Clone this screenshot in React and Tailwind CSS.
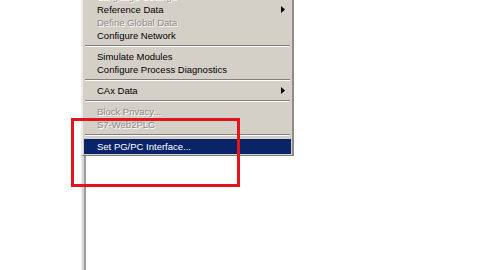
import React from 'react';

const items = [
  { type: 'item', label: 'Language Settings', disabled: true, sub: true },
  { type: 'item', label: 'Reference Data', sub: true },
  { type: 'item', label: 'Define Global Data', disabled: true },
  { type: 'item', label: 'Configure Network' },
  { type: 'sep' },
  { type: 'item', label: 'Simulate Modules' },
  { type: 'item', label: 'Configure Process Diagnostics' },
  { type: 'sep' },
  { type: 'item', label: 'CAx Data', sub: true },
  { type: 'sep' },
  { type: 'item', label: 'Block Privacy...', disabled: true },
  { type: 'item', label: 'S7-Web2PLC', disabled: true },
  { type: 'sep' },
  { type: 'item', label: 'Set PG/PC Interface...', active: true },
];

const Arrow = ({ active }) => (
  <svg width="4" height="7" viewBox="0 0 4 7" className="shrink-0">
    <polygon points="0,0 4,3.5 0,7" fill={active ? '#ffffff' : '#000000'} />
  </svg>
);

const MenuRow = ({ item }) => {
  if (item.type === 'sep') {
    return (
      <div className="h-[8px] flex flex-col justify-center px-[1px]">
        <div className="h-[1px] bg-[#808080]"></div>
        <div className="h-[1px] bg-white"></div>
      </div>
    );
  }
  const textCls = item.active
    ? 'text-white'
    : item.disabled
    ? 'text-[#8c8a86] [text-shadow:1px_1px_0_#ffffff]'
    : 'text-black';
  return (
    <div
      className={`flex items-center justify-between pl-[13px] pr-[6px] ${
        item.active ? 'h-[15px] bg-[#0a246a]' : 'h-[13px]'
      }`}
    >
      <span className={`text-[9.5px] leading-none whitespace-nowrap ${textCls}`}>{item.label}</span>
      {item.sub && <Arrow active={item.active} />}
    </div>
  );
};

export default function App() {
  return (
    <div
      className="relative w-[480px] h-[270px] bg-white overflow-hidden"
      style={{ fontFamily: '"Liberation Sans", Arial, sans-serif' }}
    >
      <div className="flex h-full">
        <div className="w-[81px] shrink-0"></div>
        <div className="flex flex-col -mt-[10px]">
          {/* context menu */}
          <div className="w-[213px] bg-[#d4d0c8] border-l-2 border-l-[#ecebe8] border-r-2 border-r-[#8e8c88] border-b border-b-[#808080] pl-[1px] pr-[1px] pb-[1px]">
            {items.map((item, idx) => (
              <MenuRow key={idx} item={item} />
            ))}
          </div>
          {/* window edge below the menu */}
          <div className="flex-1 w-[5px] bg-[#d8d6d2] border-l border-l-[#eeeeee] border-r-2 border-r-[#9c9c9c]"></div>
        </div>
      </div>
      {/* red annotation box */}
      <div className="absolute left-[71px] top-[118px] w-[169px] h-[69px] border-[3px] border-[#e3141c]"></div>
    </div>
  );
}
